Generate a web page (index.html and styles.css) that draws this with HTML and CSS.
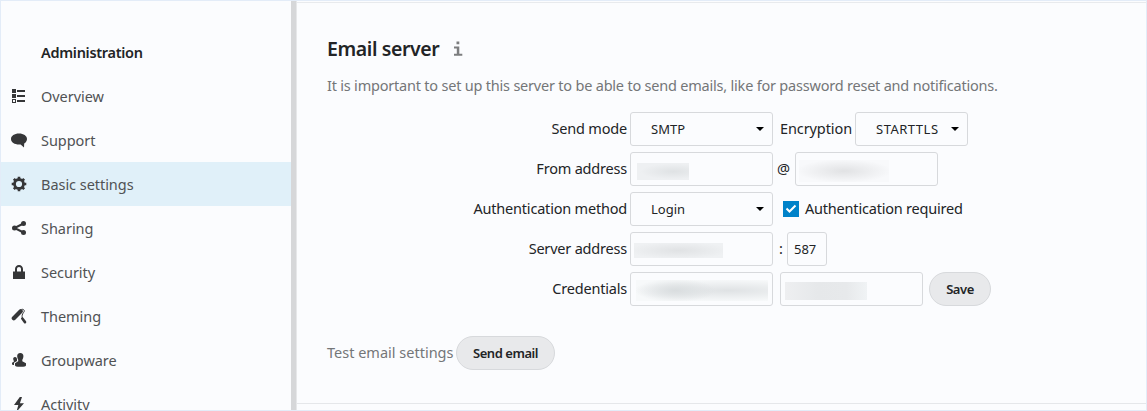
FILE: index.html
```
<!DOCTYPE html>
<html lang="en">
<head>
<meta charset="utf-8">
<title>Basic settings</title>
<link rel="stylesheet" href="styles.css">
</head>
<body>
<div class="app">
  <nav class="sidebar">
    <h1 class="nav-title">Administration</h1>
    <a class="nav-item"><svg class="icon" viewBox="0 0 16 16"><path d="M1 1h4v4H1zM1 6h4v4H1zM6 2h8v2H6zM6 7h8v2H6zM6 12h8v2H6zM1 11h4v4H1zM2 12v2h2v-2z" fill-rule="evenodd"/></svg><span>Overview</span></a>
    <a class="nav-item"><svg class="icon" viewBox="0 0 16 16"><path d="M8 1.500c4.600 0 8 2.400 8 5.500 0 1.900-1.100 3.500-2.800 4.500L13 15.500 9.600 12.400C4.500 13 0 10.700 0 7c0-3.100 3.400-5.500 8-5.500z"/></svg><span>Support</span></a>
    <a class="nav-item active"><svg class="icon" viewBox="0 0 16 16"><circle cx="8" cy="8" r="4.500" fill="none" stroke="#353638" stroke-width="2.800"/><path d="M6.700 .7h2.600v3H6.700zM6.700 12.300h2.600v3H6.700zM.7 6.700h3v2.600h-3zM12.300 6.700h3v2.600h-3z"/><path d="M6.700 .7h2.600v3H6.700zM6.700 12.300h2.600v3H6.700zM.7 6.700h3v2.600h-3zM12.300 6.700h3v2.600h-3z" transform="rotate(45 8 8)"/></svg><span>Basic settings</span></a>
    <a class="nav-item"><svg class="icon" viewBox="0 0 16 16"><path d="M12.500 3.500 3.500 8l9 4.500" fill="none" stroke="#353638" stroke-width="2"/><circle cx="12.500" cy="3.500" r="2.500"/><circle cx="3.500" cy="8" r="2.500"/><circle cx="12.500" cy="12.500" r="2.500"/></svg><span>Sharing</span></a>
    <a class="nav-item"><svg class="icon" viewBox="0 0 16 16"><path d="M8 1C5.600 1 4 2.800 4 5v2.500H2V15h12V7.500h-2V5c0-2.200-1.600-4-4-4zm0 2c1.200 0 2 .9 2 2v2.500H6V5c0-1.100.8-2 2-2z"/></svg><span>Security</span></a>
    <a class="nav-item"><svg class="icon" viewBox="0 0 16 16"><path d="M2.800 10.300 9.700 3.300" fill="none" stroke="#353638" stroke-width="4.200" stroke-linecap="round"/><path d="M10.500 1.400c2.500-.6 3.600 1.400 2 3.200-1.400 1.600-1.800 3.700-1 5.300" fill="none" stroke="#353638" stroke-width="1"/><path d="m11.300 10.500 2.700 3.600" fill="none" stroke="#353638" stroke-width="2.600" stroke-linecap="round"/></svg><span>Theming</span></a>
    <a class="nav-item"><svg class="icon" viewBox="0 0 16 16"><path d="M9.300 1C7.200 1 6 2.500 6.200 4.500c.1 1.700.7 2.500 1 3.300v1.500L4 11.300v1.900c0 1 1.500 1.600 5.500 1.600s5.500-.5 5.500-1.600v-1.900l-3.700-2V7.800c.4-.8 1-1.600 1.100-3.300C12.600 2.500 11.400 1 9.300 1z"/><path d="M4 5C2.600 5 2 6 2.200 7.300l.6 1.600v.8L1 10.800v1.500c0 .5.700.8 2 .8v-2.400l3-1.700V7.500C6 6 5.500 5 4 5z"/></svg><span>Groupware</span></a>
    <a class="nav-item"><svg class="icon" viewBox="0 0 16 16"><path d="M8.800 1 3 9h4.300L5.500 15.800 13 7.200H8.900L11 1z"/></svg><span>Activity</span></a>
  </nav>
  <div class="divider"></div>
  <main class="content">
    <section class="section">
      <h2 class="title"><span>Email server</span><svg class="info" viewBox="0 0 16 16"><path d="M6.500 .5H9.300v2.700H6.500zM4 5.500h5.300v7.200h3V14.700H4v-2h2.800V7.500H4z"/></svg></h2>
      <p class="hint">It is important to set up this server to be able to send emails, like for password reset and notifications.</p>
      <form class="form">
        <div class="row"><label class="label">Send mode</label><div class="field select wide"><span>SMTP</span><i class="caret"></i></div><span class="enc">Encryption</span><div class="field select tls"><span>STARTTLS</span><i class="caret"></i></div></div>
        <div class="row"><label class="label">From address</label><div class="field wide"><i class="smudge from"></i></div><span class="at">@</span><div class="field wide"><i class="smudge domain"></i></div></div>
        <div class="row"><label class="label">Authentication method</label><div class="field select wide"><span>Login</span><i class="caret"></i></div><svg class="check" viewBox="0 0 16 16"><path class="check-bg" d="M0 0h16v16H0z"/><path d="m3.500 7.500 3 3 6-6" fill="none" stroke="#fff" stroke-width="2"/></svg><span class="required">Authentication required</span></div>
        <div class="row"><label class="label">Server address</label><div class="field wide"><i class="smudge server"></i></div><span class="colon">:</span><div class="field port"><span>587</span></div></div>
        <div class="row"><label class="label">Credentials</label><div class="field wide"><i class="smudge user"></i></div><div class="field wide password"><i class="smudge pass"></i></div><button class="button save" type="button">Save</button></div>
      </form>
      <div class="test"><span class="test-label">Test email settings</span><button class="button send" type="button">Send email</button></div>
    </section>
  </main>
</div>
</body>
</html>
```

FILE: styles.css
```
* { box-sizing: border-box; }
body { margin: 0; font-family: "Noto Sans", sans-serif; font-size: 14.5px; color: #222426; }
.app { display: flex; width: 1147px; height: 411px; overflow: hidden; background: #fbfcfe; border: 1px solid #e3ecf8; }
.sidebar { width: 290px; flex: none; padding-top: 29px; }
.nav-title { margin: 0; height: 44px; padding-left: 40px; font-size: 14.5px; line-height: 44px; font-weight: 600; letter-spacing: -0.3px; white-space: nowrap; }
.nav-item { display: flex; align-items: center; gap: 14px; height: 44px; padding-left: 10px; color: #505254; letter-spacing: -0.04px; white-space: nowrap; }
.nav-item.active { background: #e0f0f9; }
.icon { width: 16px; height: 16px; flex: none; fill: #353638; }
.divider { width: 6px; flex: none; margin-top: -1px; background: #d6d7d9; border-right: 1px solid #e6e7e9; }
.content { flex: 1; padding-top: 1px; }
.section { height: 402px; padding: 33px 0 0 30px; border-top: 1px solid #e8eaed; border-bottom: 1px solid #e5e7ea; }
.title { display: flex; align-items: center; gap: 12px; margin: 0; height: 26px; font-size: 19.5px; line-height: 26px; font-weight: 600; letter-spacing: -0.4px; white-space: nowrap; }
.title span { width: 111px; }
.info { width: 16px; height: 16px; fill: #7c7d7f; }
.hint { margin: 11px 0 0; height: 24px; line-height: 24px; color: #747678; letter-spacing: -0.21px; white-space: nowrap; }
.form { display: grid; gap: 6px; margin: 15px 0 0; }
.row { display: flex; align-items: center; height: 34px; white-space: nowrap; }
.label, .enc, .at, .required, .colon, .test-label { padding-bottom: 2px; letter-spacing: -0.2px; }
.label { width: 300px; margin-right: 3px; text-align: right; }
.field { display: flex; align-items: center; flex: none; height: 34px; border: 1px solid #d7d9dc; border-radius: 3px; font-size: 13px; }
.wide { width: 143px; }
.select { justify-content: space-between; padding: 0 8px 0 20px; }
.caret { border: 4px solid transparent; border-top-color: #000; border-bottom: 0; }
.enc { width: 75px; margin-left: 7px; letter-spacing: -0.1px; }
.tls { width: 113px; letter-spacing: 0.5px; }
.at { width: 18px; margin-left: 4px; }
.check { width: 16px; height: 16px; margin: 0 6px 0 10px; }
.check-bg { fill: #0082c9; }
.colon { width: 8px; margin-left: 6px; }
.port { width: 40px; padding-left: 6px; }
.password { margin: 0 6px 0 7px; }
.smudge { display: block; }
.from { width: 52px; height: 17px; margin: 5px 0 0 6px; background: radial-gradient(ellipse at 70% 50%, #dfe2e4, transparent 65%), #eef0f2; }
.domain { width: 90px; height: 22px; margin: 4px 0 0 3px; background: radial-gradient(ellipse at center, #e1e2e4, #f8f9fb 75%); }
.server { width: 89px; height: 15px; margin: 3px 0 0 3px; background: radial-gradient(ellipse at center, #e0e2e4, #eff1f3 80%); }
.user { width: 132px; height: 21px; margin: 3px 0 0 5px; background: radial-gradient(ellipse 40px 12px at 30% 50%, #d9dddf, transparent), radial-gradient(ellipse at 70% 50%, #dfe2e4, #f7f9fa 75%); }
.pass { width: 82px; height: 18px; margin: 3px 0 0 4px; background: linear-gradient(90deg, #eeeff1, #e6e8ea 40%, #e7e9eb 75%, #f0f3f5); }
.button { height: 34px; padding: 0; border: 1px solid #d7d9dc; border-radius: 17px; background: #e8e9eb; color: #222426; font: 600 13px "Noto Sans", sans-serif; letter-spacing: -0.45px; }
.save { width: 62px; }
.send { width: 99px; }
.test { display: flex; align-items: center; height: 34px; margin-top: 30px; color: #747678; white-space: nowrap; }
.test-label { width: 129px; letter-spacing: 0; }
```
